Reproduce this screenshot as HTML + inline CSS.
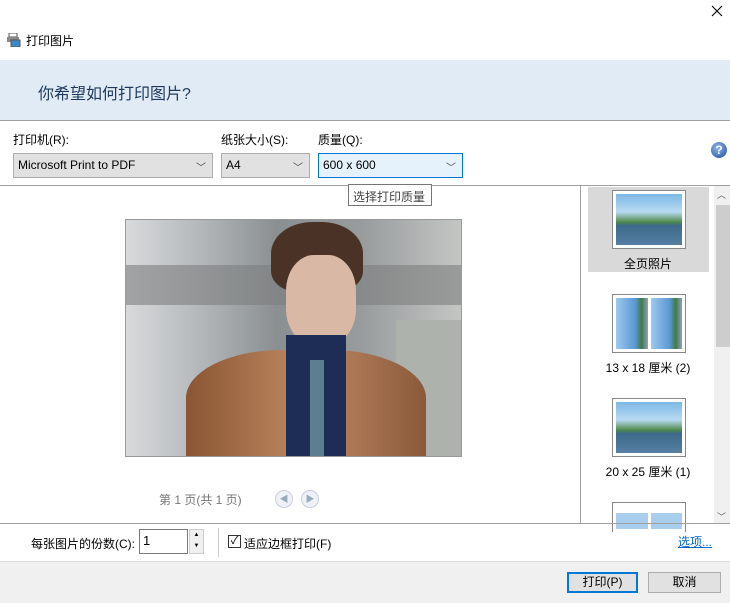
<!DOCTYPE html>
<html><head><meta charset="utf-8"><style>
*{box-sizing:border-box;margin:0;padding:0}
body{width:730px;height:603px;position:relative;background:#fff;font-family:"Liberation Sans","Noto Sans CJK SC",sans-serif;font-size:12px;color:#000;overflow:hidden}
.a{position:absolute}
.dd{position:absolute;top:153px;height:25px;background:#e1e1e1;border:1px solid #adadad;padding:4px 4px;font-size:12px}
.dd .ch{position:absolute;right:6px;top:5px;font-size:10px;color:#444}
.th{position:absolute;left:612px;width:74px;border:1px solid #888;background:#fff;padding:3px}
.pic{background:linear-gradient(180deg,#7cb8e6 0%,#b9daf2 35%,#4f8a4c 55%,#3d6a8a 62%,#567fa3 100%)}
.cap{position:absolute;width:128px;left:584px;text-align:center;font-size:12px}
.btn{position:absolute;top:572px;height:21px;border:1px solid #adadad;background:#e1e1e1;text-align:center;line-height:19px;font-size:12px}
</style></head><body>
<svg class="a" style="left:711px;top:5px" width="12" height="12"><path d="M1 1L11 11M11 1L1 11" stroke="#000" stroke-width="1.1"/></svg>
<svg class="a" style="left:7px;top:33px" width="14" height="14"><rect x="2" y="0" width="8" height="4" fill="#fff" stroke="#555"/><rect x="0" y="4" width="12" height="5" fill="#888"/><rect x="4" y="7" width="9" height="7" fill="#3a8ac8" stroke="#555"/></svg>
<div class="a" style="left:26px;top:32px;font-size:12px">打印图片</div>
<div class="a" style="left:0;top:60px;width:730px;height:61px;background:#e1ebf6;border-bottom:1px solid #a0a0a0"></div>
<div class="a" style="left:38px;top:80px;font-size:16px;color:#1e395b">你希望如何打印图片?</div>
<div class="a" style="left:13px;top:131px">打印机(R):</div>
<div class="a" style="left:221px;top:131px">纸张大小(S):</div>
<div class="a" style="left:318px;top:131px">质量(Q):</div>
<div class="dd" style="left:13px;width:200px">Microsoft Print to PDF<span class="ch">﹀</span></div>
<div class="dd" style="left:221px;width:89px">A4<span class="ch">﹀</span></div>
<div class="dd" style="left:318px;width:145px;background:#e5f1fb;border-color:#0078d7">600 x 600<span class="ch">﹀</span></div>
<div class="a" style="left:711px;top:142px;width:16px;height:16px;border-radius:50%;background:radial-gradient(circle at 40% 35%,#8fb4e8,#1f4fa0);color:#fff;font-weight:bold;font-size:12px;text-align:center;line-height:16px">?</div>
<div class="a" style="left:0;top:185px;width:730px;height:1px;background:#a0a0a0"></div>
<div class="a" style="left:580px;top:185px;width:1px;height:338px;background:#a0a0a0"></div>
<div class="a" style="left:348px;top:184px;width:84px;height:22px;border:1px solid #767676;background:#fff;padding:3px 4px;color:#444">选择打印质量</div>
<div class="a" style="left:125px;top:219px;width:337px;height:238px;border:1px solid #999;overflow:hidden;background:linear-gradient(90deg,#d8dadb 0%,#b7bbbd 20%,#8a8f92 45%,#979b9c 70%,#c4c6c4 100%)">
<div class="a" style="left:0;top:45px;width:337px;height:40px;background:#7d7f7f;opacity:.6"></div>
<div class="a" style="left:270px;top:100px;width:67px;height:137px;background:#aeb2ad"></div>
<div class="a" style="left:145px;top:2px;width:92px;height:70px;border-radius:45% 45% 30% 30%;background:#4a3326"></div>
<div class="a" style="left:160px;top:35px;width:70px;height:90px;border-radius:40%;background:#d9b8a5"></div>
<div class="a" style="left:60px;top:130px;width:240px;height:120px;border-radius:40% 40% 0 0;background:linear-gradient(90deg,#8a5532,#c08964,#8a5a3a)"></div>
<div class="a" style="left:160px;top:115px;width:60px;height:125px;background:#1d2d55"></div>
<div class="a" style="left:184px;top:140px;width:14px;height:98px;background:#5b7f8f"></div>
</div>
<div class="a" style="left:159px;top:491px;color:#777">第 1 页(共 1 页)</div>
<div class="a" style="left:275px;top:490px;width:18px;height:18px;border-radius:50%;border:1px solid #ccd;background:#eef2f8;color:#9ab;font-size:9px;text-align:center;line-height:16px">◀</div>
<div class="a" style="left:301px;top:490px;width:18px;height:18px;border-radius:50%;border:1px solid #ccd;background:#eef2f8;color:#9ab;font-size:9px;text-align:center;line-height:16px">▶</div>
<div class="a" style="left:588px;top:187px;width:121px;height:85px;background:#d9d9d9"></div>
<div class="th" style="top:190px;height:59px"><div class="pic" style="height:51px"></div></div>
<div class="cap" style="top:255px">全页照片</div>
<div class="th" style="top:294px;height:59px;display:flex;gap:3px"><div class="pic" style="flex:1;background:linear-gradient(90deg,#9cc9ee,#5c98d4 60%,#3f7a48 80%,#8fa3b6)"></div><div class="pic" style="flex:1;background:linear-gradient(90deg,#9cc9ee,#5c98d4 60%,#3f7a48 80%,#8fa3b6)"></div></div>
<div class="cap" style="top:359px">13 x 18 厘米 (2)</div>
<div class="th" style="top:398px;height:59px"><div class="pic" style="height:51px"></div></div>
<div class="cap" style="top:463px">20 x 25 厘米 (1)</div>
<div class="th" style="top:502px;height:30px;border-bottom:none;display:flex;gap:3px;padding-top:10px"><div style="flex:1;background:#a9cdec"></div><div style="flex:1;background:#a9cdec"></div></div>
<div class="a" style="left:714px;top:186px;width:16px;height:337px;background:#f0f0f0"></div>
<div class="a" style="left:716px;top:205px;width:14px;height:142px;background:#cdcdcd"></div>
<div class="a" style="left:717px;top:188px;font-size:9px;color:#606060">︿</div>
<div class="a" style="left:717px;top:510px;font-size:9px;color:#606060">﹀</div>
<div class="a" style="left:0;top:523px;width:730px;height:1px;background:#a0a0a0"></div>
<div class="a" style="left:31px;top:535px">每张图片的份数(C):</div>
<div class="a" style="left:139px;top:529px;width:49px;height:25px;border:1px solid #7a7a7a;padding:3px 3px;font-size:13px">1</div>
<div class="a" style="left:189px;top:529px;width:15px;height:25px;background:#f0f0f0;border:1px solid #ccc;font-size:6px;text-align:center;line-height:11px">▲<br>▼</div>
<div class="a" style="left:218px;top:528px;width:1px;height:29px;background:#ccc"></div>
<div class="a" style="left:228px;top:535px;width:13px;height:13px;border:1px solid #333;font-size:11px;line-height:11px;text-align:center">✓</div>
<div class="a" style="left:244px;top:535px">适应边框打印(F)</div>
<div class="a" style="left:678px;top:533px;color:#0066cc;text-decoration:underline">选项...</div>
<div class="a" style="left:0;top:561px;width:730px;height:42px;background:#f0f0f0;border-top:1px solid #dcdcdc"></div>
<div class="btn" style="left:567px;width:71px;border:2px solid #0078d7;line-height:17px">打印(P)</div>
<div class="btn" style="left:648px;width:73px">取消</div>
</body></html>
